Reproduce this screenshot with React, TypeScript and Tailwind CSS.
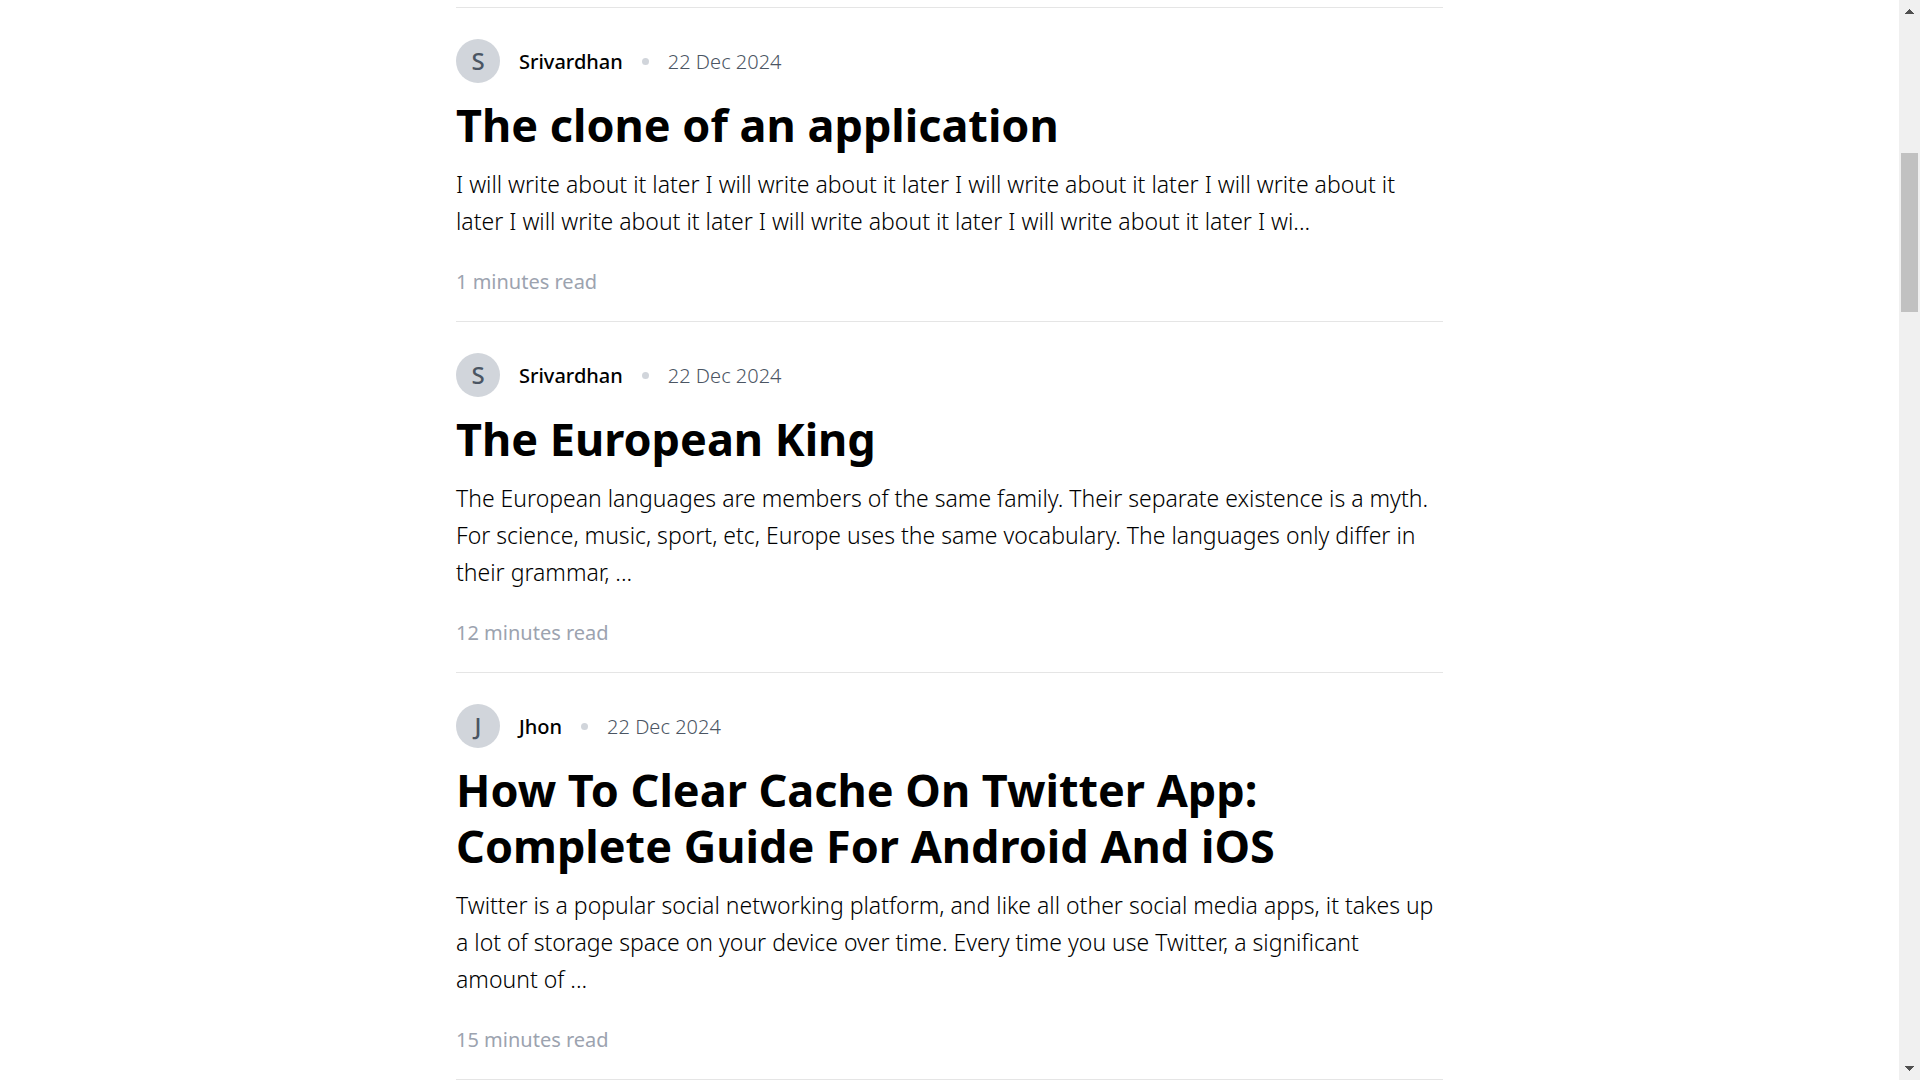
import React from "react";

type Post = {
  id: number;
  author: string;
  date: string;
  title: string;
  excerpt: string;
  minutes: number;
};

const posts: Post[] = [
  {
    id: 1,
    author: "Srivardhan",
    date: "22 Dec 2024",
    title: "The clone of an application",
    excerpt:
      "I will write about it later I will write about it later I will write about it later I will write about it later I will write about it later I will write about it later I will write about it later I wi...",
    minutes: 1,
  },
  {
    id: 2,
    author: "Srivardhan",
    date: "22 Dec 2024",
    title: "The European King",
    excerpt:
      "The European languages are members of the same family. Their separate existence is a myth. For science, music, sport, etc, Europe uses the same vocabulary. The languages only differ in their grammar, ...",
    minutes: 12,
  },
  {
    id: 3,
    author: "Jhon",
    date: "22 Dec 2024",
    title: "How To Clear Cache On Twitter App: Complete Guide For Android And iOS",
    excerpt:
      "Twitter is a popular social networking platform, and like all other social media apps, it takes up a lot of storage space on your device over time. Every time you use Twitter, a significant amount of ...",
    minutes: 15,
  },
];

function Avatar({ name }: { name: string }) {
  return (
    <div className="flex size-11 shrink-0 items-center justify-center rounded-full bg-[#d1d5db] text-2xl font-medium text-[#4b5563]">
      {name[0]}
    </div>
  );
}

function BlogCard({ post }: { post: Post }) {
  return (
    <article className="border-b border-[#e5e5e5] pt-[31px] pb-[25px]">
      <a href={`#blog-${post.id}`} className="block">
        <div className="flex items-center gap-[19px] text-[20px] leading-7">
          <Avatar name={post.author} />
          <span className="pt-0.5 font-medium text-black">{post.author}</span>
          <span className="size-[7px] rounded-full bg-[#d1d5db]" />
          <span className="pt-0.5 font-light text-[#4b5563]">{post.date}</span>
        </div>
        <h2 className="mt-[14px] text-[45px] leading-[56px] font-bold text-black">{post.title}</h2>
        <p className="mt-[13px] text-[23px] leading-[37px] font-light text-black">{post.excerpt}</p>
        <p className="mt-7 text-[20px] leading-7 font-normal text-[#9ca3af]">
          {`${post.minutes} minutes read`}
        </p>
      </a>
    </article>
  );
}

function ScrollRail() {
  return (
    <div className="flex h-full w-[21px] shrink-0 flex-col items-center bg-[#f0f0f0]">
      <button aria-label="Scroll up" className="flex h-[21px] w-full shrink-0 items-center justify-center pt-0.5">
        <svg width="9" height="5" viewBox="0 0 9 5" fill="#505050" shapeRendering="crispEdges">
          <path d="M4 0h1v1h1v1h1v1h1v1h1v1H0V4h1V3h1V2h1V1h1z" />
        </svg>
      </button>
      <div className="flex w-full flex-1 flex-col items-center">
        <div className="basis-0 grow-[132]" />
        <div className="w-[17px] basis-0 grow-[159] bg-[#c1c1c1]" />
        <div className="basis-0 grow-[747]" />
      </div>
      <button aria-label="Scroll down" className="flex h-[21px] w-full shrink-0 items-center justify-center pb-0.5">
        <svg width="9" height="5" viewBox="0 0 9 5" fill="#505050" shapeRendering="crispEdges">
          <path d="M0 0h9v1H8v1H7v1H6v1H5v1H4V4H3V3H2V2H1V1H0z" />
        </svg>
      </button>
    </div>
  );
}

export default function App() {
  return (
    <div className="flex h-screen overflow-hidden bg-white font-['Noto_Sans',sans-serif]">
      <main className="min-w-0 flex-1 pt-[7px]">
        <div className="mx-auto w-full max-w-[987px] border-t border-[#e5e5e5]">
          {posts.map((post) => (
            <BlogCard key={post.id} post={post} />
          ))}
        </div>
      </main>
      <ScrollRail />
    </div>
  );
}
